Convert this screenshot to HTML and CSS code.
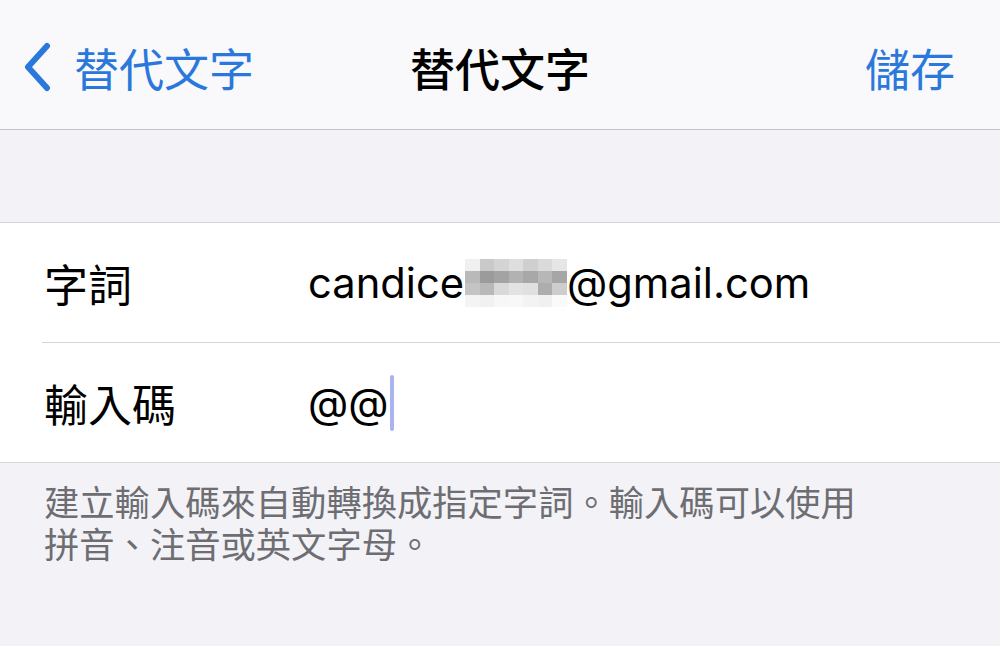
FILE: index.html
```html
<!DOCTYPE html>
<html lang="zh-Hant">
<head>
    <meta charset="UTF-8">
    <meta name="viewport" content="width=device-width, initial-scale=1.0">
    <title>替代文字</title>
    <link rel="stylesheet" href="styles.css">
</head>
<body>
    <!-- Navigation bar -->
    <header class="nav-bar">
        <a class="nav-back" href="#">
            <svg class="chevron" width="30" height="50" viewBox="0 0 30 50">
                <path d="M25 4 L6 25 L25 46" fill="none" stroke="currentColor" stroke-width="6" stroke-linecap="round" stroke-linejoin="round"/>
            </svg>
            <span>替代文字</span>
        </a>
        <h1 class="nav-title">替代文字</h1>
        <a class="nav-save" href="#">儲存</a>
    </header>

    <div class="spacer"></div>

    <section class="form-group">
        <div class="form-row">
            <span class="row-label">字詞</span>
            <span class="row-value">candice<span class="mosaic">
                <i style="background:#f0f0f0"></i><i style="background:#c9c9c9"></i><i style="background:#d4d4d4"></i><i style="background:#dedede"></i><i style="background:#cfcfcf"></i><i style="background:#dadada"></i><i style="background:#e6e6e6"></i>
                <i style="background:#b9b9b9"></i><i style="background:#9b9b9b"></i><i style="background:#a3a3a3"></i><i style="background:#b2b2b2"></i><i style="background:#a8a8a8"></i><i style="background:#b7b7b7"></i><i style="background:#a6a6a6"></i>
                <i style="background:#c4c4c4"></i><i style="background:#b8b8b8"></i><i style="background:#d9d9d9"></i><i style="background:#e3e3e3"></i><i style="background:#e0e0e0"></i><i style="background:#adadad"></i><i style="background:#cdcdcd"></i>
                <i style="background:#f4f4f4"></i><i style="background:#f1f1f1"></i><i style="background:#f7f7f7"></i><i style="background:#f8f8f8"></i><i style="background:#f3f3f3"></i><i style="background:#f0f0f0"></i><i style="background:#fafafa"></i>
            </span>@gmail.com</span>
        </div>
        <div class="form-row">
            <span class="row-label">輸入碼</span>
            <span class="row-value">@@<span class="caret"></span></span>
        </div>
    </section>

    <p class="footnote">建立輸入碼來自動轉換成指定字詞。輸入碼可以使用<br>拼音、注音或英文字母。</p>
</body>
</html>
```

FILE: styles.css
```css
body {
    margin: 0;
    background: #f2f2f7;
    font-family: 'Inter', 'Noto Sans CJK TC', sans-serif;
    color: #000;
    width: 1000px;
    height: 646px;
    overflow: hidden;
}
a {
    text-decoration: none;
}
.nav-bar {
    height: 130px;
    box-sizing: border-box;
    background: #f9f9fb;
    border-bottom: 1px solid #c4c4c8;
    display: grid;
    grid-template-columns: 1fr auto 1fr;
    align-items: center;
    padding: 6px 22px 0;
}
.nav-back {
    display: flex;
    align-items: center;
    gap: 22px;
    color: #2b78dc;
    font-size: 45px;
    font-family: 'Noto Sans CJK TC', sans-serif;
}
.chevron {
    display: block;
    margin-top: -2px;
}
.nav-title {
    margin: 0;
    font-size: 45px;
    font-weight: 500;
    font-family: 'Noto Sans CJK TC', sans-serif;
}
.nav-save {
    justify-self: end;
    margin-right: 23px;
    color: #2b78dc;
    font-size: 45px;
    font-family: 'Noto Sans CJK TC', sans-serif;
}
.spacer {
    height: 92px;
    border-bottom: 1px solid #d6d6da;
}
.form-group {
    background: #fff;
    border-bottom: 1px solid #d6d6da;
}
.form-row {
    display: flex;
    align-items: center;
    height: 119px;
    padding-left: 44px;
}
.form-row + .form-row {
    border-top: 1px solid #d6d6da;
    margin-left: 42px;
    padding-left: 2px;
}
.row-label {
    width: 264px;
    font-size: 44px;
    font-family: 'Noto Sans CJK TC', sans-serif;
}
.row-value {
    display: flex;
    align-items: center;
    font-size: 41.7px;
}
.mosaic {
    display: grid;
    grid-template-columns: repeat(7, 14.5px);
    grid-auto-rows: 12px;
    width: 101px;
    margin: 0 1px;
}
.caret {
    width: 4px;
    height: 56px;
    border-radius: 2px;
    background: #a9b3ee;
    margin-left: 1px;
}
.footnote {
    margin: 0;
    padding: 17px 44px;
    font-size: 35.3px;
    line-height: 42px;
    color: #6d6d72;
    font-family: 'Noto Sans CJK TC', sans-serif;
}
```
